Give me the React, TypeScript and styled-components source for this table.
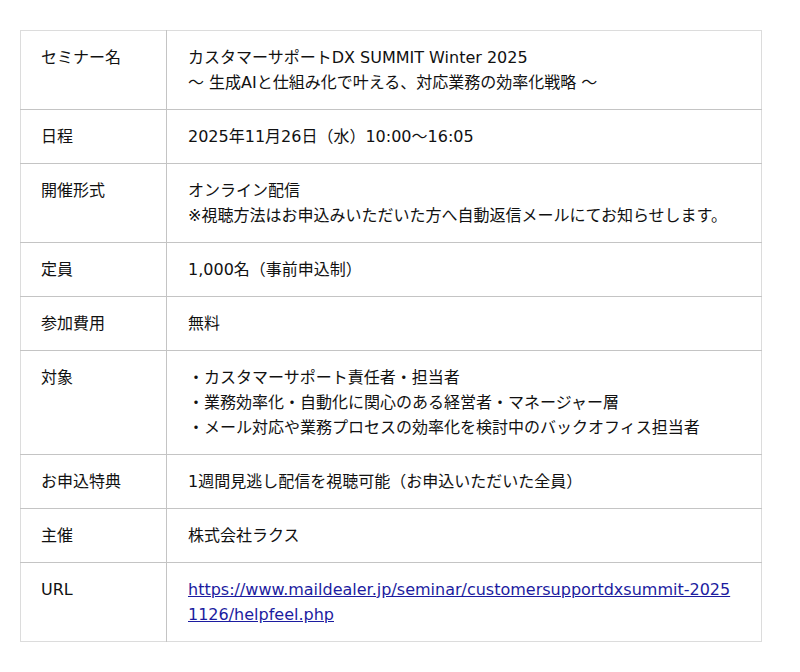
import React from 'react';
import styled, {createGlobalStyle} from "styled-components";

const GlobalStyle = createGlobalStyle`
  body {
    margin: 0;
    background: #ffffff;
    font-family: "DejaVu Sans", "Noto Sans CJK JP", sans-serif;
    color: #111111;
  }
`

const rows: {label: string; lines: React.ReactNode[]}[] = [
    {label: "セミナー名", lines: ["カスタマーサポートDX SUMMIT Winter 2025", "〜 生成AIと仕組み化で叶える、対応業務の効率化戦略 〜"]},
    {label: "日程", lines: ["2025年11月26日（水）10:00〜16:05"]},
    {label: "開催形式", lines: ["オンライン配信", "※視聴方法はお申込みいただいた方へ自動返信メールにてお知らせします。"]},
    {label: "定員", lines: ["1,000名（事前申込制）"]},
    {label: "参加費用", lines: ["無料"]},
    {label: "対象", lines: ["・カスタマーサポート責任者・担当者", "・業務効率化・自動化に関心のある経営者・マネージャー層", "・メール対応や業務プロセスの効率化を検討中のバックオフィス担当者"]},
    {label: "お申込特典", lines: ["1週間見逃し配信を視聴可能（お申込いただいた全員）"]},
    {label: "主催", lines: ["株式会社ラクス"]},
];

const url = "https://www.maildealer.jp/seminar/customersupportdxsummit-20251126/helpfeel.php";

const App = () => {
    return (
        <Page>
            <GlobalStyle/>
            <Table>
                <tbody>
                {rows.map((row) => (
                    <Row key={row.label}>
                        <Label>{row.label}</Label>
                        <Value>
                            {row.lines.map((line, i) => (
                                <Line key={i}>{line}</Line>
                            ))}
                        </Value>
                    </Row>
                ))}
                <Row>
                    <Label>URL</Label>
                    <Value>
                        <Link href={url}>{url}</Link>
                    </Value>
                </Row>
                </tbody>
            </Table>
        </Page>
    );
};

export default App;

const Page = styled.div`
  padding: 30px 20px 30px 20px;
`

const Table = styled.table`
  width: 742px;
  border-collapse: collapse;
  border: 1px solid #dcdcdc;
  font-size: 16px;
  line-height: 25px;
`

const Row = styled.tr`
  border-bottom: 1px solid #c4c4c4;
  &:last-child {
    border-bottom: 1px solid #dcdcdc;
  }
`

const Label = styled.th`
  width: 146px;
  box-sizing: border-box;
  padding: 14px 20px;
  text-align: left;
  vertical-align: top;
  font-weight: normal;
  border-right: 1px solid #c4c4c4;
`

const Value = styled.td`
  padding: 14px 27px 14px 21px;
  vertical-align: top;
  word-break: break-all;
`

const Line = styled.div``

const Link = styled.a`
  color: #1c1ca0;
  text-decoration: underline;
`
